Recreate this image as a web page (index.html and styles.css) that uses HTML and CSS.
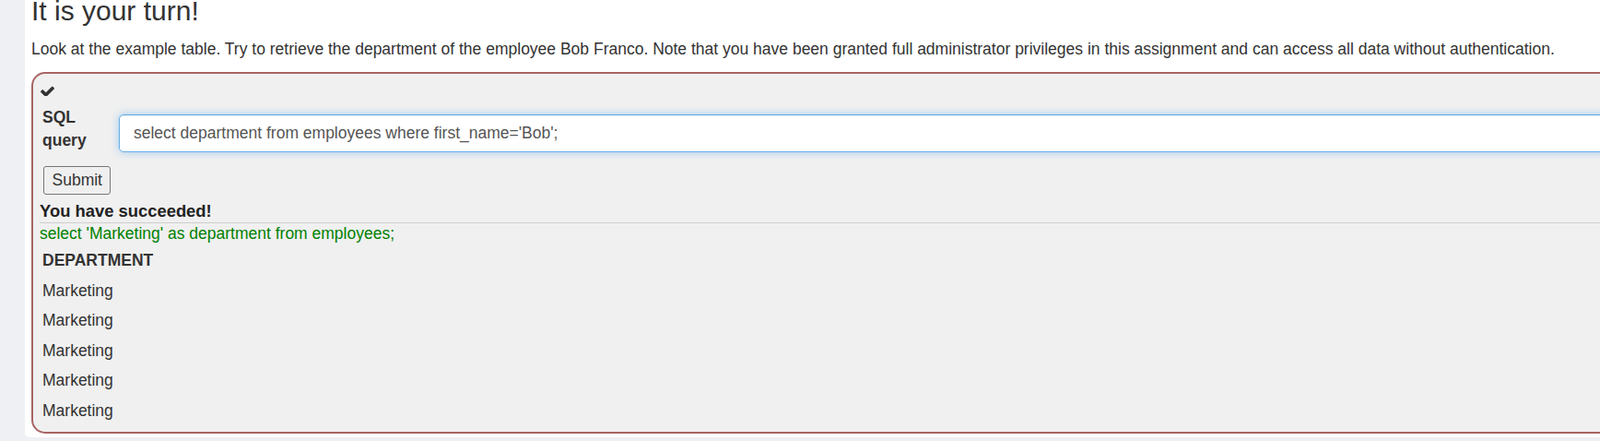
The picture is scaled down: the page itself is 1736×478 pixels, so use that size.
FILE: index.html
```html
<!DOCTYPE html>
<html lang="en">
<head>
<meta charset="utf-8">
<title>It is your turn!</title>
<link rel="stylesheet" href="styles.css">
</head>
<body>
<div class="page">
  <div class="panel">
    <h3 class="title">It is your turn!</h3>
    <p class="intro">Look at the example table. Try to retrieve the department of the employee Bob Franco. Note that you have been granted full administrator privileges in this assignment and can access all data without authentication.</p>
    <div class="attack">
      <div class="status">
        <svg class="check" viewBox="121 270 1550 1160" aria-hidden="true"><path d="M1671 566q0 40-28 68l-724 724-136 136q-28 28-68 28t-68-28l-136-136-362-362q-28-28-28-68t28-68l136-136q28-28 68-28t68 28l294 295 656-657q28-28 68-28t68 28l136 136q28 28 28 68z"/></svg>
      </div>
      <form class="query-form">
        <div class="query-row">
          <label class="query-label" for="query">SQL query</label>
          <input class="query-input" id="query" type="text" value="select department from employees where first_name='Bob';">
        </div>
        <button class="submit" type="button">Submit</button>
      </form>
      <div class="feedback">
        <div class="feedback-title">You have succeeded!</div>
        <hr class="divider">
        <div class="feedback-sql">select 'Marketing' as department from employees;</div>
        <table class="result">
          <thead>
            <tr><th>DEPARTMENT</th></tr>
          </thead>
          <tbody>
            <tr><td>Marketing</td></tr>
            <tr><td>Marketing</td></tr>
            <tr><td>Marketing</td></tr>
            <tr><td>Marketing</td></tr>
            <tr><td>Marketing</td></tr>
          </tbody>
        </table>
      </div>
    </div>
  </div>
</div>
</body>
</html>
```
FILE: styles.css
```css
* {
  box-sizing: border-box;
}

html, body {
  margin: 0;
  padding: 0;
  overflow: hidden;
}

body {
  background: #eef0f4;
  font-family: "Liberation Sans", Arial, Helvetica, sans-serif;
  font-size: 17.5px;
  line-height: 25px;
  color: #333;
}

.page {
  height: 478px;
}

.panel {
  margin-left: 27px;
  background: #fff;
  padding: 0 0 0 7px;
  border-bottom-left-radius: 5px;
  overflow: hidden;
}

.title {
  margin: -5px 0 12.7px;
  font-size: 30px;
  line-height: 33px;
  font-weight: 400;
  color: #333;
}

.intro {
  margin: 0 0 12.3px;
  white-space: nowrap;
}

.attack {
  margin: 0 -120px 4px 0;
  border: 2px solid #a86464;
  border-radius: 15px;
  background: #f0f0f0;
  padding: 4px 7px 6.5px 7px;
}

.status {
  height: 25px;
  padding: 9px 0 0 1px;
}

.check {
  display: block;
  width: 15px;
  height: 11.2px;
  fill: #333;
}

.query-form {
  margin: 0;
}

.query-row {
  display: flex;
  align-items: flex-start;
}

.query-label {
  width: 50px;
  margin: 6.4px 0 0 3px;
  font-weight: 700;
  line-height: 25px;
}

.query-input {
  flex: 1;
  margin: 15px 0 0 33px;
  height: 41px;
  padding: 7px 15px;
  font: inherit;
  line-height: 25px;
  color: #555;
  background: #fff;
  border: 1px solid #66afe9;
  border-radius: 5px;
  box-shadow: inset 0 1px 1px rgba(0, 0, 0, 0.075), 0 0 10px rgba(102, 175, 233, 0.6);
  outline: none;
}

.submit {
  display: block;
  margin: 14.6px 0 0 4px;
  height: 31px;
  padding: 2px 8.5px;
  font: inherit;
  line-height: 25px;
  color: #333;
  background: #efefef;
  border: 1px solid #767676;
  border-radius: 3px;
}

.feedback-title {
  margin-top: 5px;
  font-size: 18.4px;
  font-weight: 700;
  line-height: 25px;
  color: #222;
}

.divider {
  margin: 0;
  border: 0;
  border-top: 1px solid #cfcfcf;
  height: 0;
}

.feedback-sql {
  color: #008000;
  line-height: 22px;
  margin-bottom: 2.6px;
}

.result {
  border-collapse: collapse;
}

.result th,
.result td {
  padding: 3.75px 3px;
  text-align: left;
  line-height: 25px;
}

.result th {
  font-weight: 700;
}
```
